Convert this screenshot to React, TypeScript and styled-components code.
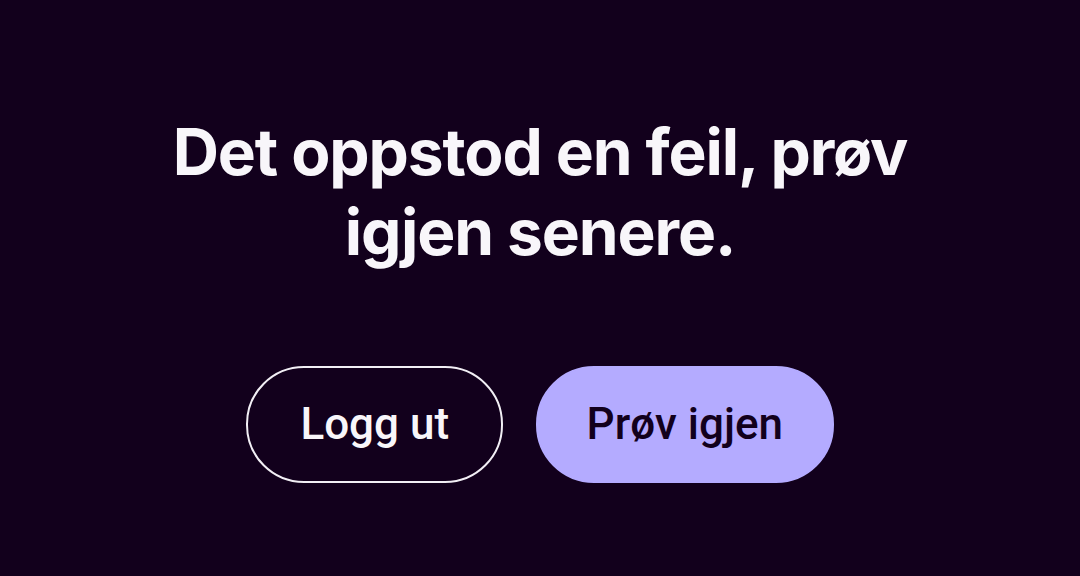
import React from "react";
import styled, { createGlobalStyle } from "styled-components";

const Global = createGlobalStyle`
  html, body { margin: 0; padding: 0; background: #12001c; }
  * { box-sizing: border-box; }
`;

const Page = styled.main`
  min-height: 100vh;
  display: flex;
  flex-direction: column;
  align-items: center;
  justify-content: center;
  background: #12001c;
  padding-top: 18px;
`;

const Heading = styled.h1`
  margin: 0;
  font-family: Inter, "Noto Sans", sans-serif;
  font-weight: 700;
  font-size: 64px;
  line-height: 80px;
  letter-spacing: -1.1px;
  color: #f8f6fa;
  text-align: center;
  max-width: 780px;
`;

const Actions = styled.div`
  display: flex;
  gap: 33px;
  margin-top: 94px;
`;

const Button = styled.button<{ $primary?: boolean }>`
  height: 117px;
  padding: 0 ${(p) => (p.$primary ? 48.5 : 52)}px;
  border-radius: 58px;
  font-family: Roboto, "Liberation Sans", sans-serif;
  font-weight: 500;
  font-size: 44px;
  cursor: pointer;
  border: 2.5px solid ${(p) => (p.$primary ? "#b4abff" : "#f2eff5")};
  background: ${(p) => (p.$primary ? "#b4abff" : "transparent")};
  color: ${(p) => (p.$primary ? "#12001c" : "#f8f6fa")};
`;

export default function App() {
  return (
    <>
      <Global />
      <Page>
        <Heading>Det oppstod en feil, prøv igjen senere.</Heading>
        <Actions>
          <Button>Logg ut</Button>
          <Button $primary>Prøv igjen</Button>
        </Actions>
      </Page>
    </>
  );
}
